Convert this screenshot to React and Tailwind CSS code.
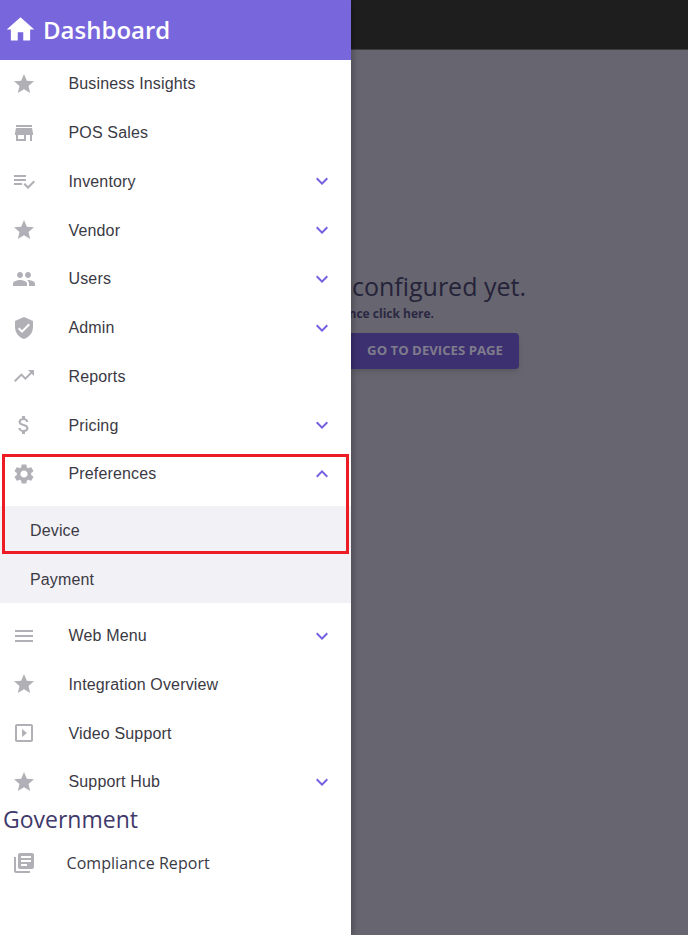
const P = {
  star: "M12 17.27 18.18 21l-1.64-7.03L22 9.24l-7.19-.61L12 2 9.19 8.63 2 9.24l5.46 4.73L5.82 21z",
  store: "M20 4H4v2h16V4zm1 10v-2l-1-5H4l-1 5v2h1v6h10v-6h4v6h2v-6h1zm-9 4H6v-4h6v4z",
  check: "M14 10H2v2h12v-2zm0-4H2v2h12V6zM2 16h8v-2H2v2zm19.5-4.5L23 13l-6.99 7-4.51-4.5L13 14l3.01 3 5.49-5.5z",
  people: "M16 11c1.66 0 2.99-1.34 2.99-3S17.66 5 16 5c-1.66 0-3 1.34-3 3s1.34 3 3 3zm-8 0c1.66 0 2.99-1.34 2.99-3S9.66 5 8 5C6.34 5 5 6.34 5 8s1.34 3 3 3zm0 2c-2.33 0-7 1.17-7 3.5V19h14v-2.5c0-2.33-4.67-3.5-7-3.5zm8 0c-.29 0-.62.02-.97.05 1.16.84 1.97 1.97 1.97 3.45V19h6v-2.5c0-2.33-4.67-3.5-7-3.5z",
  shield: "M12 1L3 5v6c0 5.55 3.84 10.74 9 12 5.16-1.26 9-6.45 9-12V5l-9-4zm-2 16l-4-4 1.41-1.41L10 14.17l6.59-6.59L18 9l-8 8z",
  trend: "M16 6l2.29 2.29-4.88 4.88-4-4L2 16.59 3.41 18l6-6 4 4 6.3-6.29L22 12V6z",
  money: "M11.8 10.9c-2.27-.59-3-1.2-3-2.15 0-1.09 1.01-1.85 2.7-1.85 1.78 0 2.44.85 2.5 2.1h2.21c-.07-1.72-1.12-3.3-3.21-3.81V3h-3v2.16c-1.94.42-3.5 1.68-3.5 3.61 0 2.31 1.91 3.46 4.7 4.13 2.5.6 3 1.48 3 2.41 0 .69-.49 1.79-2.7 1.79-2.06 0-2.87-.92-2.98-2.1h-2.2c.12 2.19 1.76 3.42 3.68 3.83V21h3v-2.15c1.95-.37 3.5-1.5 3.5-3.55 0-2.84-2.43-3.81-4.7-4.4z",
  gear: "M19.14 12.94c.04-.3.06-.61.06-.94 0-.32-.02-.64-.07-.94l2.03-1.58c.18-.14.23-.41.12-.61l-1.92-3.32c-.12-.22-.37-.29-.59-.22l-2.39.96c-.5-.38-1.03-.7-1.62-.94l-.36-2.54c-.04-.24-.24-.41-.48-.41h-3.84c-.24 0-.43.17-.47.41l-.36 2.54c-.59.24-1.13.57-1.62.94l-2.39-.96c-.22-.08-.47 0-.59.22L2.74 8.87c-.12.21-.08.47.12.61l2.03 1.58c-.05.3-.09.63-.09.94s.02.64.07.94l-2.03 1.58c-.18.14-.23.41-.12.61l1.92 3.32c.12.22.37.29.59.22l2.39-.96c.5.38 1.03.7 1.62.94l.36 2.54c.05.24.24.41.48.41h3.84c.24 0 .44-.17.47-.41l.36-2.54c.59-.24 1.13-.56 1.62-.94l2.39.96c.22.08.47 0 .59-.22l1.92-3.32c.12-.22.07-.47-.12-.61l-2.01-1.58zM12 15.6c-1.98 0-3.6-1.62-3.6-3.6s1.62-3.6 3.6-3.6 3.6 1.62 3.6 3.6-1.62 3.6-3.6 3.6z",
  menu: "M3 18h18v-2H3v2zm0-5h18v-2H3v2zm0-7v2h18V6H3z",
  home: "M10 20v-6h4v6h5v-8h3L12 3 2 12h3v8z",
  play: "M10 8v8l5-4-5-4zm9-5H5c-1.1 0-2 .9-2 2v14c0 1.1.9 2 2 2h14c1.1 0 2-.9 2-2V5c0-1.1-.9-2-2-2zm0 16H5V5h14v14z",
  books: "M4 6H2v14c0 1.1.9 2 2 2h14v-2H4V6zm16-4H8c-1.1 0-2 .9-2 2v12c0 1.1.9 2 2 2h12c1.1 0 2-.9 2-2V4c0-1.1-.9-2-2-2zm-1 9H9V9h10v2zm-4 4H9v-2h6v2zm4-8H9V5h10v2z",
  down: "M16.59 8.59L12 13.17 7.41 8.59 6 10l6 6 6-6z",
  up: "M12 8l-6 6 1.41 1.41L12 10.83l4.59 4.58L18 14z",
};

function Icon({ d, className }) {
  return (
    <svg viewBox="0 0 24 24" className={className} fill="currentColor" aria-hidden="true">
      <path d={d} />
    </svg>
  );
}

function Row({ icon, label, arrow }) {
  return (
    <div className="flex h-[48.75px] items-center pl-[11.5px] pr-[17px]">
      <Icon d={icon} className="h-6 w-6 shrink-0 text-[#b1b0b6]" />
      <span className="ml-[33px] flex-1 pt-px text-base tracking-[0.15px] text-[#3b3a44]">{label}</span>
      {arrow && <Icon d={arrow} className="h-6 w-6 shrink-0 text-[#7461e0]" />}
    </div>
  );
}

function SubRow({ label }) {
  return (
    <div className="flex h-[48.5px] items-center pl-[30px] pt-px text-base tracking-[0.15px] text-[#3b3a44]">{label}</div>
  );
}

const first = [
  [P.star, "Business Insights"],
  [P.store, "POS Sales"],
  [P.check, "Inventory", P.down],
  [P.star, "Vendor", P.down],
  [P.people, "Users", P.down],
  [P.shield, "Admin", P.down],
  [P.trend, "Reports"],
  [P.money, "Pricing", P.down],
  [P.gear, "Preferences", P.up],
];
const second = [
  [P.menu, "Web Menu", P.down],
  [P.star, "Integration Overview"],
  [P.play, "Video Support"],
  [P.star, "Support Hub", P.down],
];

export default function App() {
  return (
    <div className="relative flex h-[935px] w-[688px] overflow-hidden bg-[#67656f] font-['Open_Sans',sans-serif]">
      <aside className="relative z-10 flex h-full w-[351px] shrink-0 flex-col bg-white font-['Liberation_Sans',sans-serif] shadow-[2px_0_6px_rgba(0,0,0,0.25)]">
        <div className="flex h-[59.5px] items-center bg-[#7866dd] pl-1 font-['Open_Sans',sans-serif] text-white">
          <Icon d={P.home} className="h-[33px] w-[33px] shrink-0" />
          <span className="ml-[6px] text-2xl font-semibold">Dashboard</span>
        </div>
        {first.map(([i, l, a]) => <Row key={l} icon={i} label={l} arrow={a} />)}
        <div className="mt-2 bg-[#f2f1f6]">
          <SubRow label="Device" />
          <SubRow label="Payment" />
        </div>
        <div className="mt-2">
          {second.map(([i, l, a]) => <Row key={l} icon={i} label={l} arrow={a} />)}
        </div>
        <div className="pl-[3px] font-['Open_Sans',sans-serif] text-[23px] leading-[26px] text-[#3f3a6b]">Government</div>
        <div className="mt-[7px] flex h-[48px] items-center pl-[11.5px] font-['Open_Sans',sans-serif]">
          <Icon d={P.books} className="h-6 w-6 shrink-0 text-[#b1b0b6]" />
          <span className="ml-[31px] text-base tracking-[0.05px] text-[#3b3a44]">Compliance Report</span>
        </div>
        <div className="absolute left-[2px] top-[454px] h-[100px] w-[347px] border-[3px] border-[#ed1c24]" />
      </aside>

      <main className="flex min-w-0 flex-1 flex-col">
        <div className="h-[50px] shrink-0 border-b border-[#3d3c40] bg-[#1e1e1e]" />
        <div className="mt-[219px] flex w-[175px] justify-end whitespace-nowrap text-[25px] leading-[34px] text-[#25233a]">
          No devices configured yet.
        </div>
        <div className="mt-[2px] flex w-[83px] justify-end whitespace-nowrap text-xs font-bold leading-[18px] text-[#2a2842]">
          For assistance click here.
        </div>
        <div className="mt-[10px] flex h-[36px] w-[168px] items-center justify-end rounded-r bg-[#3c3070] pr-4 text-[13.2px] font-bold text-[#7f7c8c] shadow-md">
          GO TO DEVICES PAGE
        </div>
      </main>
    </div>
  );
}
